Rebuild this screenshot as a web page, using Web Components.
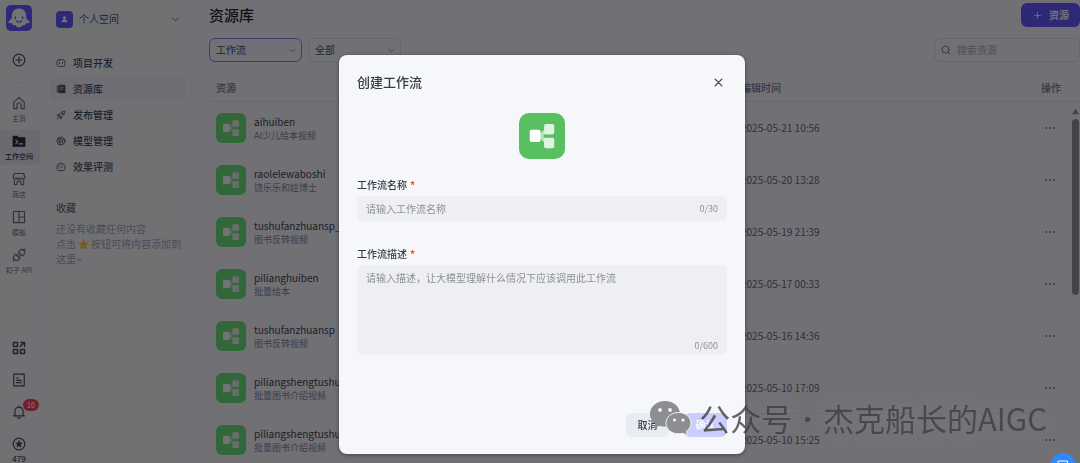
<!DOCTYPE html>
<html lang="zh-CN">
<head>
<meta charset="utf-8">
<title>资源库</title>
<style>
body { margin: 0; font: 10px/16px "Noto Sans CJK SC", sans-serif; color: #363845; background: #f9f9fb; }
</style>
</head>
<body>
<workspace-app></workspace-app>
<script>
const ICONS = {
  ghost: '<path fill="#fff" d="M12 3.200c-4 0-6.600 2.900-6.600 6.800v2.300L2.600 15c-.8.900-.4 1.900.7 1.900h2.300c.3 1.700 1.800 2.500 3.200 1.600.9 1.700 2 2.300 3.200 2.300s2.300-.6 3.200-2.300c1.400.9 2.900.1 3.200-1.600h2.300c1.100 0 1.500-1 .7-1.900l-2.800-2.700V10c0-3.900-2.600-6.800-6.600-6.800z"/><path d="M8.600 11v1.400M15.400 11v1.400M9.600 14.600c1.300 1.500 3.500 1.500 4.800 0" stroke="#5147ff" stroke-width="1.200"/>',
  person: '<circle cx="12" cy="8.500" r="3.500" fill="#fff"/><path fill="#fff" d="M5.500 18c0-8 13-8 13 0z"/>',
  plusCircle: '<circle cx="12" cy="12" r="10"/><path d="M12 7v10M7 12h10"/>',
  home: '<path d="M3 10.500 12 2.500l9 8V21.500h-5.500V15a3.500 3.500 0 0 0-7 0v6.500H3z"/>',
  terminal: '<path fill="currentColor" d="M2 4h7l2 2.500h11V21H2z"/><path stroke="#f0f0f5" d="M6.500 10.500l3.500 3-3.500 3M12.500 17H18"/>',
  shop: '<path d="M4 2.500h16L22 9c0 4-5 4-5 .5 0 4-5 4-5 0 0 4-5 4-5 0C7 13 2 13 2 9zM4 13.500v8h4.500V18c0-3 7-3 7 0v3.500H20v-8"/>',
  layout: '<path d="M2.500 2.500h19v19h-19zM12 2.500v19M12 12h9.500"/>',
  plug: '<path d="M11 6.500l3-3a5 5 0 0 1 7 7l-3 3zM6 10.500l7.500 7.500-3 2.500a5 5 0 0 1-7-7zM8.500 13l3-3M11.500 15.500l3-3M19.500 4.500l2.500-2.500M4.500 19.500L2 22"/>',
  apps: '<path stroke-width="2.600" d="M2.500 2.500h7v7h-7zM2.500 14.500h7v7h-7zM14.500 14.500h7v7h-7zM14 9.500l6.500-6.500M15 2.500h6.500V9"/>',
  doc: '<path d="M3 2h18v20H3zM8 8.500h3M8 12.500h8M8 16.500h8"/>',
  bell: '<path d="M5 18.500v-8a7 7 0 0 1 14 0v8M2.500 18.500h19M9.500 22h5M12 3.500V2"/>',
  starCircle: '<circle cx="12" cy="12" r="10"/><path fill="currentColor" stroke-width="1" d="M12 6.500l1.700 3.500 3.800.6-2.700 2.700.6 3.800-3.400-1.800-3.400 1.800.6-3.800-2.700-2.700 3.800-.6z"/>',
  bot: '<rect x="2.500" y="4" width="19" height="16.500" rx="6"/><path d="M8.500 10.500v3M15.500 10.500v3"/>',
  library: '<path fill="currentColor" d="M7.500 3h14v18h-14z"/><path d="M3 4.500v15"/><path stroke="#e5e5ee" d="M11.500 9h6M11.500 13h4"/>',
  rocket: '<path d="M8 12c2-6 7-9.500 13.500-9.500C21.500 9 18 14 12 16zM8.500 10.500L3.500 11l-1 3 5 .5M13.500 15.500l-.5 5-3 1-.5-5M2.500 21.500l5-5"/><circle cx="15.500" cy="8.500" r="1.500"/>',
  model: '<circle cx="12" cy="12" r="9.500"/><path d="M3.500 8.500l7-2.500 6 3 4.500-1M10.500 6l-3 7 4 8M7.500 13l6.500 1.500 2.500-5.500M14 14.500l5 3.500"/>',
  gauge: '<path d="M5 20a10 10 0 1 1 14 0zM12 14.500l4-5M6.500 12h1M8.500 8l.7.700M12 6v1"/>',
  chevron: '<path d="M3 8l9 8 9-8" stroke-width="2.600"/>',
  search: '<circle cx="11" cy="11" r="8.500"/><path d="M17 17l5 5"/>',
  plus: '<path d="M12 2v20M2 12h20" stroke-width="3"/>',
  close: '<path d="M3 3l18 18M21 3L3 21" stroke-width="3.600"/>',
  more: '<g fill="currentColor" stroke="none"><circle cx="3" cy="12" r="2"/><circle cx="12" cy="12" r="2"/><circle cx="21" cy="12" r="2"/></g>',
  star: '<path fill="#ffc72e" stroke="#ffc72e" d="M12 2l3 6.500 7 .8-5.200 4.900 1.400 7.300L12 18l-6.200 3.500 1.400-7.300L2 9.300l7-.8z"/>',
  up: '<path fill="currentColor" stroke="none" d="M12 2l12 19H0z"/>',
  flow: '<path d="M11 12l5-4.500M11 12l5 4.500" stroke="#b9e4bd" stroke-width="2"/><rect x="5.600" y="8.800" width="5.600" height="6.300" rx=".9" fill="#fff"/><g fill="#def2df"><rect x="13.100" y="5.700" width="5.300" height="5.500" rx=".9"/><rect x="13.100" y="12.900" width="5.300" height="5.500" rx=".9"/></g>',
  chat: '<path d="M3 4h18v14h-9l-4 3v-3H3z"/>'
};

function define(name, css, html) {
  customElements.define(name, class extends HTMLElement {
    constructor() {
      super();
      const root = this.attachShadow({ mode: 'open' });
      const body = typeof html === 'function' ? html(n => this.getAttribute(n) || '') : html;
      root.innerHTML = `<style>*{box-sizing:border-box}button,input,select,textarea{font:inherit;color:inherit;margin:0}${css}</style>${body}`;
    }
  });
}

define('ui-icon', `
  :host { display: block; flex: none; width: var(--size, 14px); height: var(--size, 14px); }
  svg { display: block; width: 100%; height: 100%; fill: none; stroke: currentColor; stroke-width: 2; stroke-linecap: round; stroke-linejoin: round; overflow: visible; }
  svg.solid { stroke: none; }
`, a => `<svg viewBox="0 0 24 24" aria-hidden="true" class="${['ghost', 'person', 'flow'].includes(a('name')) ? 'solid' : ''}">${ICONS[a('name')]}</svg>`);

define('flow-icon', `
  :host { display: block; flex: none; width: var(--tile, 30px); height: var(--tile, 30px); border-radius: var(--tile-radius, 6px); background: var(--tile-color, #5ae167); --size: 100%; }
`, '<ui-icon name="flow"></ui-icon>');

define('rail-link', `
  :host { display: block; }
  a { display: flex; flex-direction: column; align-items: center; gap: 1px; width: 42px; height: 35px; padding: 4px 0 3px; color: #5c5e70; text-decoration: none; font-size: 7px; line-height: 14px; white-space: nowrap; border-radius: 0 4px 4px 0; }
  :host([active]) a { background: #e8e8f0; color: #14151f; font-weight: 500; }
`, a => `<a href="#"><ui-icon name="${a('icon')}"></ui-icon><slot></slot></a>`);

define('rail-button', `
  :host { display: block; position: relative; }
  button { display: grid; place-items: center; width: 20px; height: 20px; padding: 0; border: 0; background: none; }
  ::slotted(*) { position: absolute; top: -3px; left: 14px; padding: 0 4px; border-radius: 6px; background: #ff2f45; color: #fff; font-size: 7px; font-weight: 500; line-height: 12px; }
`, a => `<button type="button" aria-label="${a('label')}"><ui-icon name="${a('icon')}"></ui-icon></button><slot></slot>`);

define('app-rail', `
  :host { display: flex; flex-direction: column; align-items: center; width: 45px; height: 100%; padding: 5px 6px 0 0; border-right: 1px solid #f1f1f6; }
  .logo { width: 26px; height: 26px; border-radius: 5px; background: #5147ff; --size: 26px; }
  .add { margin: 19px 0 12px; }
  hr { width: 16px; margin: 0 0 9px; border: 0; border-top: 1px solid #e6e6ee; }
  nav { display: grid; gap: 3px; }
  .tools { display: grid; justify-items: center; gap: 12px; margin-top: auto; }
  .points { font-size: 8px; font-weight: 500; line-height: 9px; }
`, `
  <a class="logo" href="#" aria-label="首页"><ui-icon name="ghost"></ui-icon></a>
  <rail-button class="add" icon="plusCircle" label="新建"></rail-button>
  <hr>
  <nav>
    <rail-link icon="home">主页</rail-link>
    <rail-link icon="terminal" active>工作空间</rail-link>
    <rail-link icon="shop">商店</rail-link>
    <rail-link icon="layout">模板</rail-link>
    <rail-link icon="plug">扣子 API</rail-link>
  </nav>
  <div class="tools">
    <rail-button icon="apps" label="应用"></rail-button>
    <rail-button icon="doc" label="文档"></rail-button>
    <rail-button icon="bell" label="通知"><span>10</span></rail-button>
    <rail-button icon="starCircle" label="积分"></rail-button>
  </div>
  <span class="points">479</span>`);

define('side-link', `
  :host { display: block; }
  a { display: flex; align-items: center; gap: 7px; height: 24px; padding: 0 6px; border-radius: 5px; color: inherit; text-decoration: none; font-weight: 500; --size: 10px; }
  :host([active]) a { background: #f0f0f7; }
`, a => `<a href="#"><ui-icon name="${a('icon')}"></ui-icon><slot></slot></a>`);

define('space-sidebar', `
  :host { display: block; width: 146px; height: 100%; padding: 10px 4px 0 5px; border-right: 1px solid #f1f1f6; }
  .space { display: flex; align-items: center; gap: 6px; width: 100%; height: 18px; padding: 0 7px 0 6px; border: 0; background: none; --size: 7px; }
  .avatar { display: grid; place-items: center; width: 17px; height: 17px; border-radius: 4px; background: #5147ff; --size: 11px; }
  .space > ui-icon { margin-left: auto; }
  nav { display: grid; gap: 2px; margin-top: 23px; }
  h2 { margin: 21px 6px 5px; font-size: 10px; font-weight: 500; color: #5c5e70; }
  p { margin: 0 4px 0 6px; line-height: 15px; color: #9a9cb0; }
  p ui-icon { display: inline-block; vertical-align: -2px; margin: 0 2px; --size: 11px; }
`, `
  <button class="space" type="button"><span class="avatar"><ui-icon name="person"></ui-icon></span>个人空间<ui-icon name="chevron"></ui-icon></button>
  <nav>
    <side-link icon="bot">项目开发</side-link>
    <side-link icon="library" active>资源库</side-link>
    <side-link icon="rocket">发布管理</side-link>
    <side-link icon="model">模型管理</side-link>
    <side-link icon="gauge">效果评测</side-link>
  </nav>
  <h2>收藏</h2>
  <p>还没有收藏任何内容<br>点击<ui-icon name="star"></ui-icon>按钮可将内容添加到这里~</p>`);

define('filter-select', `
  :host { display: grid; align-items: center; width: 93px; height: 24px; --size: 7px; }
  select, ui-icon { grid-area: 1 / 1; }
  select { appearance: none; width: 100%; height: 100%; padding: 0 6px; border: 1px solid #dcdce6; border-radius: 6px; background: none; }
  :host([active]) select { border-color: #7c75ff; }
  ui-icon { justify-self: end; margin-right: 6px; color: #666878; pointer-events: none; }
`, a => `<select aria-label="${a('label')}"><option>${a('value')}</option></select><ui-icon name="chevron"></ui-icon>`);

const rows = [
  ['aihuiben', 'AI少儿绘本视频', '2025-05-21 10:56'],
  ['raolelewaboshi', '饶乐乐和娃博士', '2025-05-20 13:28'],
  ['tushufanzhuansp_', '图书反转视频', '2025-05-19 21:39'],
  ['pilianghuiben', '批量绘本', '2025-05-17 00:33'],
  ['tushufanzhuansp', '图书反转视频', '2025-05-16 14:36'],
  ['piliangshengtushu', '批量图书介绍视频', '2025-05-10 17:09'],
  ['piliangshengtushu', '批量图书介绍视频', '2025-05-10 15:25']
];

define('resource-table', `
  :host { display: grid; grid-template-columns: 1fr 11px; }
  table { width: 100%; border-collapse: separate; border-spacing: 0; table-layout: fixed; }
  th { height: 28px; padding: 0; border-bottom: 1px solid #e4e4ec; color: #6b6d7e; font-weight: 500; text-align: left; }
  td { height: 52px; padding: 0; border-bottom: 1px solid #ebebf2; color: #55576a; }
  th:first-child, td:first-child { padding-left: 7px; }
  .time { width: 300px; } .act { width: 28px; }
  .item { display: flex; align-items: center; gap: 8px; }
  .name { display: block; line-height: 15px; color: #2a2c38; }
  small { display: block; font-size: 9px; line-height: 13px; color: #777989; }
  button { display: block; padding: 3px 4px; border: 0; background: none; --size: 10px; color: #14151f; }
  .scroll { display: flex; flex-direction: column; align-items: center; gap: 4px; margin-top: 27px; padding: 6px 0 0 1px; border-top: 1px solid #e4e4ec; color: #89898b; --size: 7px; }
  .thumb { width: 7px; height: 176px; border-radius: 4px; background: currentColor; }
`, `
  <table>
    <thead><tr><th>资源</th><th class="time">编辑时间</th><th class="act">操作</th></tr></thead>
    <tbody>${rows.map(r => `<tr>
      <td><div class="item"><flow-icon></flow-icon><div><span class="name">${r[0]}</span><small>${r[1]}</small></div></div></td>
      <td>${r[2]}</td>
      <td><button type="button" aria-label="更多操作"><ui-icon name="more"></ui-icon></button></td></tr>`).join('')}</tbody>
  </table>
  <div class="scroll"><ui-icon name="up"></ui-icon><div class="thumb"></div></div>`);

define('resource-page', `
  :host { display: block; min-width: 0; height: 100%; overflow: hidden; padding-left: 18px; background: #f9f8fd; }
  header { display: flex; align-items: center; justify-content: space-between; height: 30px; }
  h1 { margin: 0; font-size: 15px; font-weight: 500; color: #08090f; }
  header button { display: flex; align-items: center; gap: 8px; height: 24px; padding: 0 11px 0 13px; border: 0; border-radius: 6px; background: #5147ff; color: #fff; font-weight: 700; --size: 7px; }
  .filters { display: flex; gap: 6px; margin: 8px 0 12px; }
  .search { display: flex; align-items: center; gap: 6px; width: 146px; height: 24px; margin-left: auto; padding: 0 6px; border: 1px solid #dcdce6; border-radius: 6px; color: #55576a; --size: 10px; }
  .search input { flex: 1; min-width: 0; padding: 0; border: 0; outline: 0; background: none; }
  input::placeholder { color: #a3a5b6; }
`, `
  <header><h1>资源库</h1><button type="button"><ui-icon name="plus"></ui-icon>资源</button></header>
  <div class="filters">
    <filter-select active label="资源类型" value="工作流"></filter-select>
    <filter-select label="范围" value="全部"></filter-select>
    <label class="search"><ui-icon name="search"></ui-icon><input type="search" placeholder="搜索资源" aria-label="搜索资源"></label>
  </div>
  <resource-table></resource-table>`);

define('form-field', `
  :host { display: block; }
  label { display: block; margin-bottom: 3px; font-weight: 500; }
  label span { margin-left: 3px; color: #ff441e; font-weight: 700; }
  .box { display: flex; border-radius: 6px; background: #eeeff3; padding: 0 9px; }
  input, textarea { flex: 1; min-width: 0; border: 0; outline: 0; background: none; resize: none; padding: 0; }
  input { height: 25px; }
  .area { flex-direction: column; height: 90px; padding: 5px 9px 1px; }
  ::placeholder { color: #8e9097; }
  output { font-size: 9px; line-height: 16px; color: #8e9097; align-self: center; }
  .area output { align-self: flex-end; }
`, a => `<label for="field">${a('label')}<span>*</span></label>` + (a('rows')
  ? `<div class="box area"><textarea id="field" placeholder="${a('hint')}"></textarea><output>${a('count')}</output></div>`
  : `<div class="box"><input id="field" placeholder="${a('hint')}"><output>${a('count')}</output></div>`));

define('create-dialog', `
  :host { display: flex; justify-content: center; align-items: flex-start; position: fixed; inset: 0; padding: 55px 0 0 4px; background: rgba(22, 22, 26, .6); }
  section { width: 406px; padding: 15px 18px 17px; border-radius: 8px; background: #f6f7fb; box-shadow: 0 1px 4px rgba(0, 0, 0, .4); }
  header { display: flex; align-items: center; justify-content: space-between; height: 24px; }
  h2 { margin: 0; font-size: 13px; font-weight: 500; }
  header button { padding: 4px; border: 0; background: none; color: #484a55; --size: 9px; }
  flow-icon { --tile: 46px; --tile-radius: 10px; --tile-color: #59c062; margin: 19px auto 18px; }
  form-field + form-field { margin-top: 25px; }
  footer { display: flex; justify-content: flex-end; gap: 15px; margin-top: 58px; }
  footer button { width: 43px; height: 24px; padding: 0; border: 0; border-radius: 6px; background: #e8ebf2; font-weight: 500; }
  footer .ok { background: #cacdff; color: #fff; }
`, `
  <section role="dialog" aria-label="创建工作流">
    <header><h2>创建工作流</h2><button type="button" aria-label="关闭"><ui-icon name="close"></ui-icon></button></header>
    <flow-icon></flow-icon>
    <form-field label="工作流名称" hint="请输入工作流名称" count="0/30"></form-field>
    <form-field label="工作流描述" rows="4" hint="请输入描述，让大模型理解什么情况下应该调用此工作流" count="0/600"></form-field>
    <footer><button type="button">取消</button><button class="ok" type="button">确认</button></footer>
  </section>`);

define('help-bubble', `
  :host { position: fixed; right: 5px; bottom: -14px; --size: 12px; }
  button { display: grid; place-items: center; width: 24px; height: 24px; padding: 0; border: 0; border-radius: 50%; background: #2f88ff; color: #fff; }
`, '<button type="button" aria-label="客服"><ui-icon name="chat"></ui-icon></button>');

define('account-mark', `
  :host { display: flex; align-items: center; gap: 7px; position: fixed; right: 33px; bottom: 27px; color: rgba(62, 62, 64, .8); font-size: 31px; line-height: 36px; white-space: nowrap; pointer-events: none; text-shadow: 0 0 20px rgba(255, 255, 255, .14); }
  svg { width: 42px; height: 34px; }
  .dot { margin: 0 4px; font-family: "Noto Sans", sans-serif; font-weight: 700; }
`, `
  <svg viewBox="0 0 42 34" aria-hidden="true">
    <path fill="#8d8e91" d="M15 0C6.500 0 0 5.700 0 13c0 4.200 2.100 7.500 5.500 9.800L4 27.500l5.500-2.800c1.800.6 3.600.9 5.500.9 8.500 0 15-5.600 15-12.700S23.500 0 15 0z"/>
    <path fill="#8d8e91" stroke="#f0f1f5" stroke-width="1" d="M28.500 11.500c-7.100 0-12.500 4.700-12.500 10.700s5.400 10.600 12.500 10.600c1.500 0 3-.2 4.400-.6l4.600 2.300-1.200-4c2.900-2 4.700-4.900 4.700-8.300 0-6-5.400-10.700-12.500-10.700z"/>
    <g fill="#f6f7fb"><circle cx="10" cy="9" r="1.900"/><circle cx="20" cy="9" r="1.900"/><circle cx="24.500" cy="19" r="1.600"/><circle cx="33" cy="19" r="1.600"/></g>
  </svg><span>公众号</span><span class="dot">·</span><span>杰克船长的AIGC</span>`);

define('workspace-app', `
  :host { display: grid; grid-template-columns: auto auto 1fr; height: 100vh; overflow: hidden; }
`, `
  <app-rail></app-rail>
  <space-sidebar></space-sidebar>
  <resource-page></resource-page>
  <create-dialog></create-dialog>
  <help-bubble></help-bubble>
  <account-mark></account-mark>`);
</script>
</body>
</html>
